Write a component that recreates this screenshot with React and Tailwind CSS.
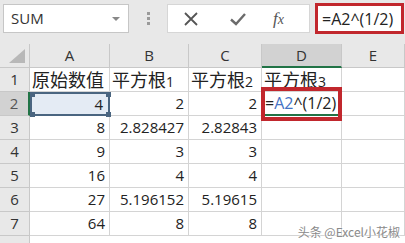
import React from "react";

const cols = ["A", "B", "C", "D", "E"];

// sheet rows: [A, B, C]
const rows = [
  ["原始数值", "平方根1", "平方根2"],
  ["4", "2", "2"],
  ["8", "2.828427", "2.82843"],
  ["9", "3", "3"],
  ["16", "4", "4"],
  ["27", "5.196152", "5.19615"],
  ["64", "8", "8"],
];

const font = { fontFamily: '"Open Sans", "Noto Sans CJK SC", sans-serif' };

function Label({ text }) {
  // CJK header text with a trailing digit rendered smaller
  const m = text.match(/^(\D+)(\d?)$/);
  return (
    <span className="whitespace-nowrap">
      <span className="text-[18px]" style={{ fontFamily: '"Noto Sans CJK SC", sans-serif' }}>{m[1]}</span>
      {m[2] && <span className="text-[14px]">{m[2]}</span>}
    </span>
  );
}

function Handle({ pos }) {
  return <div className={"absolute w-[5px] h-[5px] bg-[#4a6580] " + pos} />;
}

export default function App() {
  return (
    <div className="w-[405px] h-[243px] overflow-hidden bg-white text-[#222] relative" style={font}>
      {/* formula bar */}
      <div className="h-[44px] bg-[#e8e8e8] flex items-start pt-[3px] pl-[3px]">
        <div className="w-[126px] h-[29px] mt-[1px] bg-white border border-[#c6c6c6] flex items-center justify-between pl-[7px] pr-[8px]">
          <span className="text-[15px] text-[#333]">SUM</span>
          <span className="w-0 h-0 border-l-[4px] border-r-[4px] border-t-[4px] border-l-transparent border-r-transparent border-t-[#888]" />
        </div>
        <div className="w-[38px] h-[30px] flex flex-col items-center justify-center gap-[2px]">
          <span className="w-[3px] h-[3px] bg-[#9a9a9a]" />
          <span className="w-[3px] h-[3px] bg-[#9a9a9a]" />
          <span className="w-[3px] h-[3px] bg-[#9a9a9a]" />
        </div>
        <div className="w-[143px] h-[29px] mt-[1px] bg-white border border-[#d6d6d6] flex items-center">
          <svg width="16" height="16" viewBox="0 0 16 16" className="ml-[15px]">
            <path d="M2 2 L14 14 M14 2 L2 14" stroke="#555" strokeWidth="1.8" />
          </svg>
          <svg width="18" height="14" viewBox="0 0 18 14" className="ml-[30px]">
            <path d="M2 7.5 L7 12 L16 2" stroke="#6b6b6b" strokeWidth="2.4" fill="none" />
          </svg>
          <span className="ml-[26px] text-[17px] italic text-[#555]" style={{ fontFamily: '"Liberation Serif", serif' }}>
            f<span className="text-[14px]">x</span>
          </span>
        </div>
        <div className="ml-[5px] w-[89px] h-[31px] bg-white border-[3px] border-[#c1272d] flex items-center pl-[4px]">
          <span className="text-[16px] text-[#222] whitespace-nowrap">=A2^(1/2)</span>
        </div>
      </div>

      {/* sheet */}
      <div className="grid grid-cols-[30px_80px_79px_73px_80px_63px] auto-rows-[24px]">
        {/* header row */}
        <div className="bg-[#e8e8e8] border-r border-b border-[#c8c8c8] relative">
          <div className="absolute right-[4px] bottom-[4px] w-0 h-0 border-l-[16px] border-l-transparent border-b-[14px] border-b-[#b8b8b8]" />
        </div>
        {cols.map((c) => (
          <div
            key={c}
            className={
              c === "D"
                ? "bg-[#d2d2d2] border-r border-[#c8c8c8] border-b-2 border-b-[#217346] flex items-center justify-center text-[15px] text-[#333]"
                : "bg-[#e8e8e8] border-r border-b border-[#c8c8c8] flex items-center justify-center text-[15px] text-[#333]"
            }
          >
            {c}
          </div>
        ))}

        {rows.map((r, i) => (
          <React.Fragment key={i}>
            <div
              className={
                i === 1
                  ? "bg-[#d2d2d2] border-b border-[#c8c8c8] border-r-2 border-r-[#217346] flex items-center justify-center text-[15px] text-[#555]"
                  : "bg-[#e8e8e8] border-r border-b border-[#c8c8c8] flex items-center justify-center text-[15px] text-[#333]"
              }
            >
              {i + 1}
            </div>
            {r.map((v, j) => (
              <div
                key={j}
                className={
                  i === 1 && j === 0
                    ? "relative bg-[#e4ebf4] border-2 border-[#4a6580] flex items-center justify-end pr-[5px] text-[15px]"
                    : i === 0
                    ? "border-r border-b border-[#d4d4d4] flex items-center pl-[2px] overflow-visible"
                    : "border-r border-b border-[#d4d4d4] flex items-center justify-end pr-[4px] text-[15px]"
                }
              >
                {i === 0 ? <Label text={v} /> : v}
                {i === 1 && j === 0 && (
                  <>
                    <Handle pos="top-[-2px] left-[-2px]" />
                    <Handle pos="top-[-2px] right-[-3px]" />
                    <Handle pos="bottom-[-3px] left-[-2px]" />
                    <Handle pos="bottom-[-3px] right-[-3px]" />
                  </>
                )}
              </div>
            ))}
            {i === 0 ? (
              <div className="border-r border-b border-[#d4d4d4] flex items-center pl-[2px]">
                <Label text="平方根3" />
              </div>
            ) : i === 1 ? (
              <div className="relative border-b-2 border-b-[#217346] border-r border-[#d4d4d4] flex items-center pl-[3px] text-[16px]">
                <span className="whitespace-nowrap">
                  =<span className="text-[#4472c4]">A2</span>^(1/2)
                </span>
                <div className="absolute left-[-1px] right-[-1px] top-[-5px] bottom-[-7px] border-4 border-[#c1272d]" />
              </div>
            ) : (
              <div className="border-r border-b border-[#d4d4d4]" />
            )}
            <div className="border-r border-b border-[#d4d4d4]" />
          </React.Fragment>
        ))}
        <div className="bg-[#e8e8e8] border-r border-[#c8c8c8]" />
      </div>

      {/* watermark */}
      <div
        className="absolute right-[5px] bottom-[2px] text-[12px] text-[#8a8a8a] whitespace-nowrap"
        style={{ fontFamily: '"Noto Sans CJK SC", sans-serif', textShadow: "0 0 2px #fff, 0 0 2px #fff" }}
      >
        头条 @Excel小花椒
      </div>
    </div>
  );
}
